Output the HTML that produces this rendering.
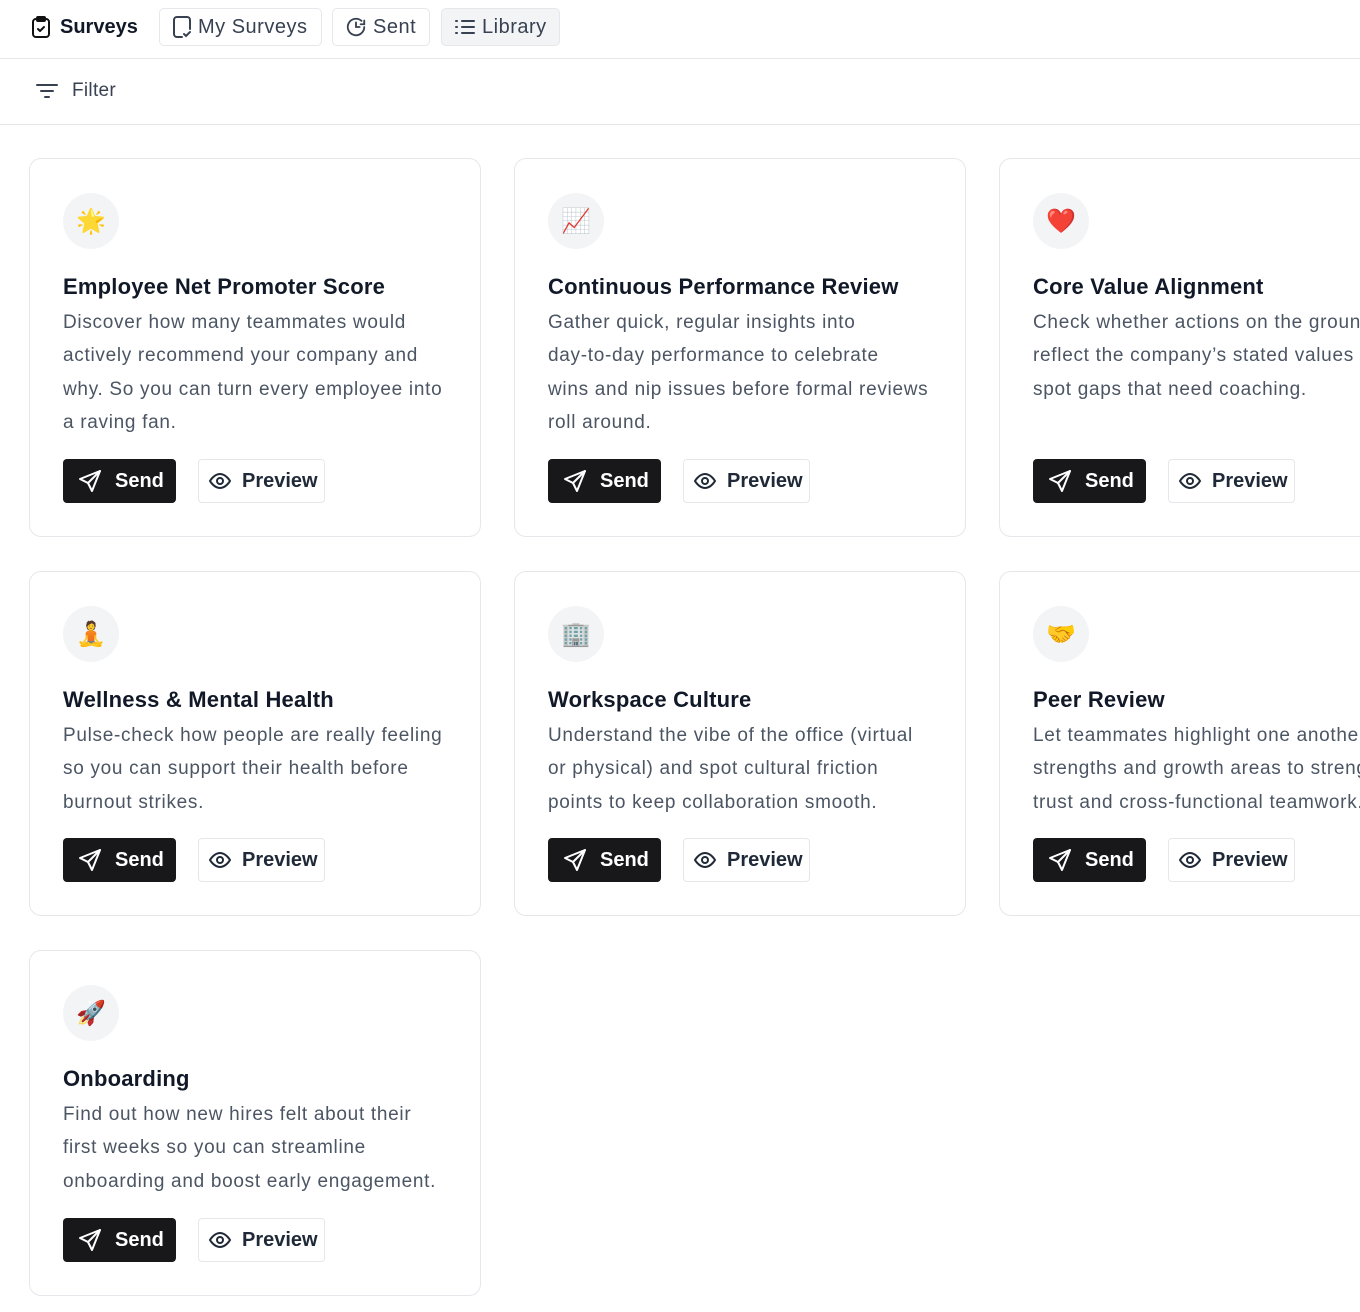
<!DOCTYPE html>
<html><head><meta charset="utf-8"><style>
*{box-sizing:border-box;margin:0;padding:0}
html,body{width:1360px;height:1312px;overflow:hidden;background:#fff;font-family:"Liberation Sans","Noto Sans CJK SC",sans-serif;color:#111827}
.top{height:59px;border-bottom:1px solid #e5e7eb;position:relative}
.brand{position:absolute;left:30px;top:15px;display:flex;align-items:center;gap:8px;font-weight:700;font-size:20px}
.tab{position:absolute;top:8px;height:38px;border:1px solid #e5e7eb;border-radius:5px;display:flex;align-items:center;gap:6px;padding:0 12px;font-size:20px;letter-spacing:0.5px;color:#374151}
.filter{height:66px;border-bottom:1px solid #e5e7eb;position:relative}
.filter .f{position:absolute;left:36px;top:21px;display:flex;align-items:center;gap:14px;font-size:19px;letter-spacing:0.3px;color:#374151}
.card{position:absolute;width:452px;border:1px solid #e5e7eb;border-radius:12px;padding:34px 33px 33px;display:flex;flex-direction:column}
.ic{width:56px;height:56px;border-radius:50%;background:#f3f4f6;display:flex;align-items:center;justify-content:center;font-size:24px;font-family:"Noto Color Emoji","DejaVu Sans",sans-serif}
.t{margin-top:24px;font-size:22px;font-weight:700;line-height:28px;letter-spacing:0.2px;white-space:nowrap}
.d{margin-top:5px;font-size:19px;letter-spacing:0.7px;line-height:33.3px;color:#4b5563;white-space:nowrap}
.b{margin-top:auto;display:flex;gap:22px}
.s,.p{height:44px;border-radius:4px;display:flex;align-items:center;font-size:20px;font-weight:700}
.s{background:#18181b;color:#fff;width:113px;padding-left:15px;gap:13px}
.p{border:1px solid #e5e7eb;width:127px;padding-left:9px;gap:10px;color:#1f2937}
</style></head><body>
<div class="top">
 <div class="brand"><svg width="22" height="24" viewBox="0 0 22 24" fill="none" stroke="#111" stroke-width="2" stroke-linecap="round" stroke-linejoin="round"><rect x="3" y="4" width="16" height="18" rx="3"/><rect x="7" y="2" width="8" height="4" rx="1"/><path d="M8 14l2 2 4-4"/></svg>Surveys</div>
 <div class="tab" style="left:159px;width:163px"><svg width="20" height="24" viewBox="0 0 20 24" fill="none" stroke="#374151" stroke-width="2" stroke-linecap="round"><path d="M10 22H5a3 3 0 0 1-3-3V5a3 3 0 0 1 3-3h10a3 3 0 0 1 3 3v9"/><path d="M12 19l2 2 4-4"/></svg>My Surveys</div>
 <div class="tab" style="left:332px;width:98px"><svg width="22" height="22" viewBox="0 0 24 24" fill="none" stroke="#374151" stroke-width="2" stroke-linecap="round"><path d="M21 12a9 9 0 1 1-3-6.7"/><path d="M12 7v5h4"/><path d="M21 5v4h-4"/></svg>Sent</div>
 <div class="tab" style="left:441px;width:119px;background:#f3f4f6"><svg width="22" height="20" viewBox="0 0 22 20" fill="none" stroke="#374151" stroke-width="2" stroke-linecap="round"><path d="M8 4h12M8 10h12M8 16h12M2 4h1M2 10h1M2 16h1"/></svg>Library</div>
</div>
<div class="filter"><div class="f"><svg width="22" height="18" viewBox="0 0 22 18" fill="none" stroke="#374151" stroke-width="2" stroke-linecap="round"><path d="M1 3h20M5 9h12M9 15h4"/></svg>Filter</div></div>

<div class="card" style="left:29px;top:158px;height:379px"><div class="ic">🌟</div><div class="t">Employee Net Promoter Score</div><div class="d">Discover how many teammates would<br>actively recommend your company and<br>why. So you can turn every employee into<br>a raving fan.</div><div class="b">BTN</div></div>
<div class="card" style="left:514px;top:158px;height:379px"><div class="ic">📈</div><div class="t">Continuous Performance Review</div><div class="d">Gather quick, regular insights into<br>day-to-day performance to celebrate<br>wins and nip issues before formal reviews<br>roll around.</div><div class="b">BTN</div></div>
<div class="card" style="left:999px;top:158px;height:379px"><div class="ic">❤️</div><div class="t">Core Value Alignment</div><div class="d">Check whether actions on the ground<br>reflect the company’s stated values and<br>spot gaps that need coaching.</div><div class="b">BTN</div></div>
<div class="card" style="left:29px;top:571px;height:345px"><div class="ic">🧘</div><div class="t">Wellness &amp; Mental Health</div><div class="d">Pulse-check how people are really feeling<br>so you can support their health before<br>burnout strikes.</div><div class="b">BTN</div></div>
<div class="card" style="left:514px;top:571px;height:345px"><div class="ic">🏢</div><div class="t">Workspace Culture</div><div class="d">Understand the vibe of the office (virtual<br>or physical) and spot cultural friction<br>points to keep collaboration smooth.</div><div class="b">BTN</div></div>
<div class="card" style="left:999px;top:571px;height:345px"><div class="ic">🤝</div><div class="t">Peer Review</div><div class="d">Let teammates highlight one another’s<br>strengths and growth areas to strengthen<br>trust and cross-functional teamwork.</div><div class="b">BTN</div></div>
<div class="card" style="left:29px;top:950px;height:346px"><div class="ic">🚀</div><div class="t">Onboarding</div><div class="d">Find out how new hires felt about their<br>first weeks so you can streamline<br>onboarding and boost early engagement.</div><div class="b">BTN</div></div>
<script>
var h='<div class="s"><svg width="24" height="24" viewBox="0 0 24 24" fill="none" stroke="#fff" stroke-width="2" stroke-linejoin="round" stroke-linecap="round"><path d="M22 2L2 10l8 4 4 8z"/><path d="M22 2L10 14"/></svg>Send</div><div class="p"><svg width="24" height="24" viewBox="0 0 24 24" fill="none" stroke="#1f2937" stroke-width="2"><path d="M2 12s4-7 10-7 10 7 10 7-4 7-10 7S2 12 2 12z"/><circle cx="12" cy="12" r="3"/></svg>Preview</div>';
document.querySelectorAll('.b').forEach(function(e){e.innerHTML=h});
</script>
</body></html>
